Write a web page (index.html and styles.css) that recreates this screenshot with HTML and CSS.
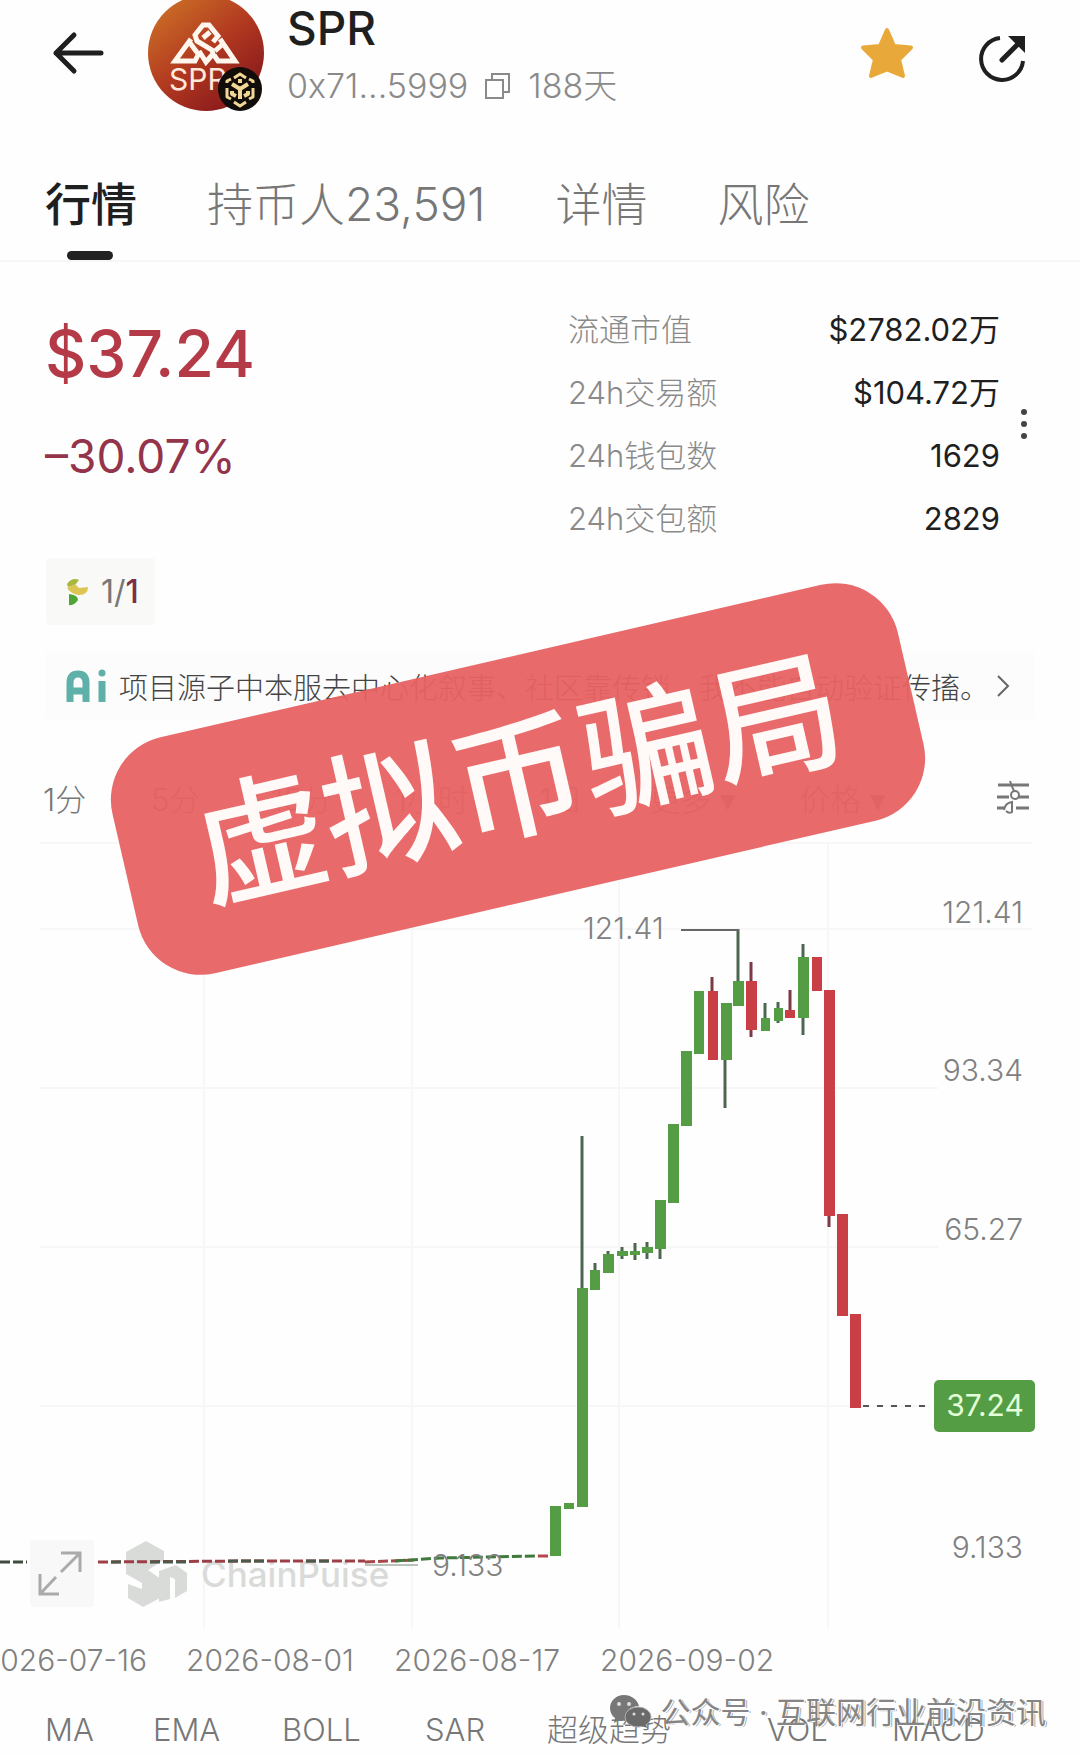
FILE: index.html
```
<!DOCTYPE html>
<html lang="zh-CN">
<head>
<meta charset="utf-8">
<meta name="viewport" content="width=device-width, initial-scale=1">
<title>SPR 行情</title>
<link rel="stylesheet" href="styles.css">
</head>
<body>
<main class="page">
  <header class="header">
    <button class="icon-btn back" type="button" aria-label="返回">
      <svg width="60" height="60" viewBox="0 0 60 60" fill="none" stroke="#1f1f1f" stroke-width="5" stroke-linecap="round" stroke-linejoin="round"><path d="M56 30H11M29 12 11 30l18 18"/></svg>
    </button>
    <svg class="logo" width="116" height="116" viewBox="0 0 116 116" role="img" aria-label="SPR">
      <defs>
        <linearGradient id="coin" x1="0.15" y1="0.1" x2="0.8" y2="0.9">
          <stop offset="0" stop-color="#c96a26"/><stop offset="0.5" stop-color="#b23a20"/><stop offset="1" stop-color="#8a1a1c"/>
        </linearGradient>
      </defs>
      <circle cx="58" cy="58" r="58" fill="url(#coin)"/>
      <g fill="none" stroke="#fff6ee" stroke-width="5" stroke-linejoin="miter">
        <path d="M65 47 70 41 61 30H55L47 40 49 46 64 55 65 59 58 67 51 56"/>
        <path d="M55 43 62 37"/>
        <path d="M43 44 27 66H47L51 58M42 48l9 12"/>
        <path d="M72 44 87 66H70L66 60M76 48l-9 8"/>
      </g>
      <text x="21" y="95" class="logo-text">SPR</text>
      <circle cx="92" cy="94" r="22" fill="#120d08"/>
      <g fill="none" stroke="#f1d795" stroke-width="3" stroke-linejoin="round">
        <path d="M86 83l6-4 6 4M79 88v-2l4-2M105 88v-2l-4-2M79 93v9l4 2M105 93v9l-4 2M86 107l6 4 6-4"/>
        <path d="M84 89l8 5 8-5M92 94v10M84 96v3l4 2M100 96v3l-4 2" stroke-width="4"/>
        <path d="M90 86h4" stroke-width="4"/>
      </g>
    </svg>
    <div class="identity">
      <h1 class="symbol">SPR</h1>
      <div class="address">
        <span>0x71...5999</span>
        <button class="icon-btn" type="button" aria-label="复制地址">
          <svg width="28" height="30" viewBox="0 0 28 30" fill="none" stroke="#8a8a8a" stroke-width="2"><path d="M2 9h17v18H2z"/><path d="M8 9V3h17v18h-6"/></svg>
        </button>
        <span>188天</span>
      </div>
    </div>
    <div class="actions">
      <button class="icon-btn" type="button" aria-label="收藏">
        <svg width="56" height="56" viewBox="0 0 56 56"><path d="M28 4 35 20 52 21.500 40 33.500 44 50 28 43.500 12 50 16 33.500 4 21.500 21 20Z" fill="#e8a83a" stroke="#e8a83a" stroke-width="4" stroke-linejoin="round"/></svg>
      </button>
      <button class="icon-btn" type="button" aria-label="分享">
        <svg width="48" height="56" viewBox="0 0 48 56" fill="none" stroke="#1f1f1f" stroke-width="4"><path d="M22 12A21 21 0 1 0 45 35"/><path d="M24 34 41 17" stroke-width="5" stroke-linecap="round"/><path d="M30 10H47V27Z" fill="#1f1f1f" stroke="none"/></svg>
      </button>
    </div>
  </header>

  <nav class="tabs">
    <a class="tab active" href="#market">行情</a>
    <a class="tab" href="#holders">持币人23,591</a>
    <a class="tab" href="#detail">详情</a>
    <a class="tab" href="#risk">风险</a>
  </nav>

  <section class="summary" id="market">
    <div class="quote">
      <p class="price">$37.24</p>
      <p class="change">–30.07%</p>
    </div>
    <dl class="stats">
      <div class="stat"><dt>流通市值</dt><dd>$2782.02万</dd></div>
      <div class="stat"><dt>24h交易额</dt><dd>$104.72万</dd></div>
      <div class="stat"><dt>24h钱包数</dt><dd>1629</dd></div>
      <div class="stat"><dt>24h交包额</dt><dd>2829</dd></div>
    </dl>
    <button class="icon-btn more" type="button" aria-label="更多">
      <svg width="8" height="32" viewBox="0 0 8 32" fill="#444"><circle cx="4" cy="4" r="3"/><circle cx="4" cy="16" r="3"/><circle cx="4" cy="28" r="3"/></svg>
    </button>
  </section>

  <button class="chip" type="button">
    <svg width="24" height="28" viewBox="0 0 24 28"><path d="M2 6Q7-1 14 2L10 7 3 9Z" fill="#a9b63c"/><path d="M2 10 10 6 14 10 23 9Q23 17 14 17 6 16 2 10Z" fill="#ddc553"/><path d="M4 16Q13 17 13 22 9 28 4 27Z" fill="#4ea535"/></svg>
    <span>1/<b>1</b></span>
  </button>

  <a class="ai" href="#ai">
    <svg width="42" height="34" viewBox="0 0 42 34" fill="none" stroke="#5eb0a8" stroke-width="7"><path d="M5 33V14Q5 5 13 5T21 14V33M5 22H21"/><path d="M37 12V33"/><circle cx="37" cy="4" r="3.500" fill="#5eb0a8" stroke="none"/></svg>
    <span class="ai-text">项目源子中本服去中心化叙事、社区靠传销、我不能自动验证传搐。</span>
    <svg class="chevron" width="14" height="24" viewBox="0 0 14 24" fill="none" stroke="#666" stroke-width="2"><path d="M2 2 12 12 2 22"/></svg>
  </a>

  <div class="frames">
    <button type="button">1分</button>
    <button type="button">5分</button>
    <button type="button">15分</button>
    <button type="button">1小时</button>
    <button type="button">1日</button>
    <button type="button">更多 ▾</button>
    <button type="button">价格 ▾</button>
    <button class="settings" type="button" aria-label="图表设置">
      <svg width="36" height="34" viewBox="0 0 36 34" fill="none" stroke="#777" stroke-width="3"><path d="M4 5H35M3 17H15M24 17H35M3 28H11M22 28H35"/><circle cx="21" cy="15" r="4" stroke-width="2"/><path d="M16 1Q18 7 20 11M10 30Q11 23 18 22V32Q15 34 12 31" stroke-width="2"/></svg>
    </button>
  </div>

  <svg class="chart" viewBox="0 830 1080 870" role="img" aria-label="SPR K线图">
    <g stroke="#f7f7f7" stroke-width="2">
      <path d="M40 844H1032M40 930H1032M40 1089H938M40 1248H938M40 1407H930"/>
      <path d="M204 844V1630M412 844V1630M619 844V1630M828 844V1630"/>
    </g>

    <g class="mark">
      <path d="M126 1560V1553L146 1542 164 1552V1561L148 1571 164 1582V1597L143 1608 128 1599V1585L142 1590V1584L126 1575Z"/>
      <path d="M159 1572 176 1566 187 1574V1592L175 1599V1580L170 1578V1600L159 1603Z"/>
      <text x="201" y="1588" class="mark-text">ChainPuise</text>
    </g>

    <g fill="none" stroke-width="3" stroke-dasharray="10 3">
      <path d="M0 1563H27" stroke="#3e4a3e"/>
      <path d="M98 1563 250 1562H365" stroke="#9c3f46"/>
      <path d="M111 1563H122M150 1563H187M228 1562H265M306 1562H330" stroke="#4b5a4b"/>
      <path d="M365 1563 416 1561" stroke="#a8474a"/>
      <path d="M395 1562 440 1559 538 1557" stroke="#3f7a3c"/>
      <path d="M538 1557H548" stroke="#b5474a"/>
    </g>
    <path d="M365 1566H418" stroke="#778877" stroke-width="1"/>

    <g stroke="#4c6650" stroke-width="3">
      <path d="M582 1137V1290M595 1264V1272M608 1252V1256M622 1248V1260M635 1244V1261M647 1243V1260M660 1248V1260M725 1060V1109M738 930V984M765 1004V1020M778 1003V1024M803 945V1036"/>
    </g>
    <g stroke="#7c3a44" stroke-width="3">
      <path d="M712 978V994M751 963V1038M790 991V1012M829 1216V1228"/>
    </g>
    <g fill="#549d45">
      <path d="M550 1507h11v50h-11zM564 1504h10v6h-10zM577 1289h11v219h-11zM590 1271h10v20h-10zM603 1255h11v19h-11zM617 1252h11v5h-11zM630 1252h10v4h-10zM642 1248h11v6h-11zM655 1201h11v49h-11zM668 1125h11v79h-11zM681 1052h11v75h-11zM694 992h10v63h-10zM721 1004h11v57h-11zM733 982h11v25h-11zM761 1019h9v13h-9zM774 1009h9v13h-9zM798 958h11v61h-11z"/>
    </g>
    <g fill="#c93f45">
      <path d="M708 992h10v69h-10zM746 982h11v49h-11zM785 1011h10v8h-10zM812 958h10v34h-10zM824 991h11v226h-11zM837 1215h11v102h-11zM850 1315h11v94h-11z"/>
    </g>
    <path d="M681 931H739" stroke="#666" stroke-width="2"/>
    <path d="M863 1407H928" stroke="#555" stroke-width="2" stroke-dasharray="6 8"/>

    <g class="axis">
      <text x="583" y="940">121.41</text>
      <text x="432" y="1577">9.133</text>
      <g text-anchor="end">
        <text x="1023" y="924">121.41</text>
        <text x="1023" y="1082">93.34</text>
        <text x="1023" y="1241">65.27</text>
        <text x="1023" y="1559">9.133</text>
      </g>
      <rect x="934" y="1381" width="101" height="52" rx="5" fill="#549d45"/>
      <text x="985" y="1417" text-anchor="middle" class="tag-text">37.24</text>
      <g class="dates">
        <text x="147" y="1672" text-anchor="end">2026-07-16</text>
        <text x="186" y="1672">2026-08-01</text>
        <text x="394" y="1672">2026-08-17</text>
        <text x="600" y="1672">2026-09-02</text>
      </g>
    </g>

    <rect x="30" y="1541" width="64" height="67" rx="4" fill="#f8f8f8"/>
    <path d="M61 1573 80 1554M61 1554H80V1573M56 1578 40 1595M40 1575V1595H59" fill="none" stroke="#aaa" stroke-width="3"/>
  </svg>

  <nav class="indicators">
    <button type="button">MA</button>
    <button type="button">EMA</button>
    <button type="button">BOLL</button>
    <button type="button">SAR</button>
    <button type="button">超级趋势</button>
    <button type="button">VOL</button>
    <button type="button">MACD</button>
  </nav>

  <div class="stamp">虚拟币骗局</div>

  <div class="source">
    <svg width="42" height="34" viewBox="0 0 42 34"><path d="M14 0C6 0 0 6 0 13c0 4 2 8 5 10l-1 5 5-3 6 1C14 16 21 11 29 11 27 4 21 0 14 0Z" fill="#777"/><ellipse cx="28" cy="22" rx="13" ry="10" fill="#6a6a6a" stroke="#aaa"/><path d="M35 29l3 4-7-2Z" fill="#6a6a6a"/><g fill="#ddd"><circle cx="9" cy="9" r="2"/><circle cx="19" cy="9" r="2"/><circle cx="24" cy="19" r="1.500"/><circle cx="33" cy="19" r="1.500"/></g></svg>
    <span>公众号 · 互联网行业前沿资讯</span>
  </div>
</main>
</body>
</html>
```
FILE: styles.css
```
* {
  box-sizing: border-box;
}

body {
  margin: 0;
  background: #fefefe;
  color: #1f1f1f;
  font-family: Inter, "Noto Sans CJK SC", sans-serif;
}

h1, p, dl, dd {
  margin: 0;
}

button {
  margin: 0;
  padding: 0;
  border: 0;
  background: none;
  color: inherit;
  font: inherit;
  white-space: nowrap;
}

a {
  color: inherit;
  text-decoration: none;
}

svg {
  display: block;
  flex: none;
}

.page {
  position: relative;
  overflow: hidden;
}

/* Token header */
.header {
  display: flex;
  align-items: flex-start;
  padding: 0 54px 58px 45px;
}

.icon-btn {
  display: flex;
  align-items: center;
}

.back {
  height: 106px;
}

.logo {
  margin: -5px 23px 0 43px;
}

.logo-text {
  font: 400 30px Inter, sans-serif;
  fill: #ffe9dc;
}

.identity {
  flex: 1;
}

.symbol {
  font-size: 46px;
  font-weight: 500;
  line-height: 56px;
}

.address {
  display: flex;
  align-items: center;
  gap: 16px;
  color: #8a8a8a;
  font-size: 34px;
  font-weight: 300;
  line-height: 60px;
}

.actions {
  display: flex;
  align-items: center;
  gap: 63px;
  height: 108px;
}

/* Tabs */
.tabs {
  display: flex;
  gap: 70px;
  padding: 0 45px;
  border-bottom: 2px solid #f6f6f6;
  color: #777;
  font-size: 46px;
  font-weight: 300;
  line-height: 60px;
}

.tab {
  position: relative;
  padding-bottom: 26px;
  white-space: nowrap;
}

.active {
  color: #1f1f1f;
  font-weight: 500;
}

.active::after {
  content: "";
  position: absolute;
  left: 22px;
  right: 24px;
  bottom: 0;
  height: 9px;
  border-radius: 5px;
  background: #222;
}

/* Price and stats */
.summary {
  display: grid;
  grid-template-columns: 523fr 432fr 35px;
  padding: 36px 45px 8px;
}

.quote {
  padding-top: 16px;
}

.price {
  color: #b53a48;
  font-size: 64px;
  font-weight: 500;
  line-height: 80px;
}

.change {
  margin-top: 32px;
  color: #94344b;
  font-size: 46px;
  font-weight: 400;
  line-height: 60px;
}

.stat {
  display: flex;
  justify-content: space-between;
  font-size: 31px;
  line-height: 63px;
}

.stat dt {
  color: #8a8a8a;
  font-weight: 300;
}

.stat dd {
  font-weight: 400;
}

.more {
  justify-content: center;
  padding-left: 12px;
  height: 252px;
}

.chip {
  display: flex;
  align-items: center;
  gap: 12px;
  height: 67px;
  margin-left: 46px;
  padding: 0 16px 0 19px;
  border-radius: 4px;
  background: #f9f9f8;
  color: #777;
  font-size: 32px;
}

.chip b {
  color: #7d2f48;
  font-weight: 500;
}

.ai {
  display: flex;
  align-items: center;
  height: 67px;
  margin: 27px 45px 0;
  padding: 0 25px 0 20px;
  border-radius: 4px;
  background: #fcfcfc;
}

.ai-text {
  flex: 1;
  margin-left: 12px;
  color: #444;
  font-size: 29px;
  font-weight: 300;
  white-space: nowrap;
}

/* Chart */
.frames {
  display: grid;
  grid-template-columns: 108fr 120fr 124fr 145fr 110fr 150fr 195fr 36px;
  justify-items: start;
  align-items: center;
  height: 60px;
  margin: 48px 50px 2px 43px;
  color: #777;
  font-size: 31px;
  font-weight: 300;
}

.chart {
  width: 100%;
  height: auto;
}

.axis {
  font: 300 30px Inter, sans-serif;
  fill: #808080;
}

.tag-text {
  font-weight: 400;
  fill: #e2ffd8;
}

.mark {
  fill: #d9dbd9;
}

.mark-text {
  font: 500 35px Inter, sans-serif;
}

.indicators {
  display: grid;
  grid-template-columns: 108fr 129fr 143fr 122fr 220fr 125fr 188fr;
  justify-items: start;
  padding: 9px 0 2px 45px;
  color: #777;
  font-size: 31px;
  font-weight: 300;
  line-height: 44px;
}

/* Overlays */
.stamp {
  position: absolute;
  top: 658px;
  left: 115px;
  width: 806px;
  height: 242px;
  border-radius: 64px;
  background: rgba(232, 98, 98, 0.95);
  color: #fffaf8;
  font-size: 132px;
  font-weight: 500;
  line-height: 242px;
  text-align: center;
  transform: rotate(-13deg);
}

.source {
  position: absolute;
  right: 34px;
  bottom: 22px;
  display: flex;
  align-items: center;
  gap: 8px;
  color: #858585;
  font-size: 30px;
  line-height: 40px;
  text-shadow: 1px 1px 0 #fff, 2px 1px 0 #aaa;
}
```
